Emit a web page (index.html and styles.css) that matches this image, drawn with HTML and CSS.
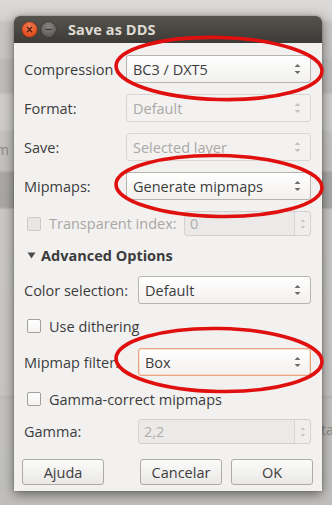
FILE: index.html
```html
<!DOCTYPE html>
<html>
<head>
<meta charset="utf-8">
<link rel="stylesheet" href="styles.css">
</head>
<body>
<div class="screen">
  <span class="bg-frag bg-m">m</span>
  <span class="bg-frag bg-ta">ta</span>
  <div class="dialog">
    <div class="titlebar">
      <span class="wbtn close"><svg width="15" height="15" viewBox="0 0 15 15"><path d="M5.3 5.3 L9.7 9.7 M9.7 5.3 L5.3 9.7" stroke="#4a1a0a" stroke-width="1.3" stroke-linecap="round"/></svg></span>
      <span class="wbtn minimize"><svg width="15" height="15" viewBox="0 0 15 15"><path d="M4.5 7.5 H10.5" stroke="#3a3a38" stroke-width="1.3"/></svg></span>
      <span class="title">Save as DDS</span>
    </div>
    <div class="content">
      <div class="grid g1">
        <span class="label">Compression</span>
        <div class="combo"><span>BC3 / DXT5</span><svg class="arr" width="7" height="12" viewBox="0 0 7 12"><path d="M0.5 4 L3.5 1 L6.5 4 Z M0.5 8 L3.5 11 L6.5 8 Z" fill="#6b6b6b"/></svg></div>
        <span class="label">Format:</span>
        <div class="combo disabled"><span>Default</span><svg class="arr" width="7" height="12" viewBox="0 0 7 12"><path d="M0.5 4 L3.5 1 L6.5 4 Z M0.5 8 L3.5 11 L6.5 8 Z" fill="#c4c2bf"/></svg></div>
        <span class="label">Save:</span>
        <div class="combo disabled"><span>Selected layer</span><svg class="arr" width="7" height="12" viewBox="0 0 7 12"><path d="M0.5 4 L3.5 1 L6.5 4 Z M0.5 8 L3.5 11 L6.5 8 Z" fill="#c4c2bf"/></svg></div>
        <span class="label">Mipmaps:</span>
        <div class="combo"><span>Generate mipmaps</span><svg class="arr" width="7" height="12" viewBox="0 0 7 12"><path d="M0.5 4 L3.5 1 L6.5 4 Z M0.5 8 L3.5 11 L6.5 8 Z" fill="#6b6b6b"/></svg></div>
      </div>

      <div class="trow">
        <span class="check disabled"></span>
        <span class="label dim">Transparent index:</span>
        <div class="spin disabled tspin"><span class="val">0</span><span class="spinbtn"><svg width="6" height="12" viewBox="0 0 6 12"><path d="M0.5 4 L3 1.5 L5.5 4 Z M0.5 8 L3 10.5 L5.5 8 Z" fill="#c8c6c3"/></svg></span></div>
      </div>

      <div class="expander">
        <svg width="9" height="7" viewBox="0 0 9 7"><path d="M0.5 0.5 H8.5 L4.5 6.5 Z" fill="#4e4e4e"/></svg>
        <span>Advanced Options</span>
      </div>

      <div class="grid g2">
        <span class="label">Color selection:</span>
        <div class="combo"><span>Default</span><svg class="arr" width="7" height="12" viewBox="0 0 7 12"><path d="M0.5 4 L3.5 1 L6.5 4 Z M0.5 8 L3.5 11 L6.5 8 Z" fill="#6b6b6b"/></svg></div>
      </div>

      <div class="crow r-dither"><span class="check"></span><span class="label">Use dithering</span></div>

      <div class="grid g2 r-filter">
        <span class="label">Mipmap filter:</span>
        <div class="combo focus"><span>Box</span><svg class="arr" width="7" height="12" viewBox="0 0 7 12"><path d="M0.5 4 L3.5 1 L6.5 4 Z M0.5 8 L3.5 11 L6.5 8 Z" fill="#6b6b6b"/></svg></div>
      </div>

      <div class="crow r-gamma-c"><span class="check"></span><span class="label">Gamma-correct mipmaps</span></div>

      <div class="grid g2 r-gamma">
        <span class="label">Gamma:</span>
        <div class="spin disabled"><span class="val">2,2</span><span class="spinbtn"><svg width="6" height="12" viewBox="0 0 6 12"><path d="M0.5 4 L3 1.5 L5.5 4 Z M0.5 8 L3 10.5 L5.5 8 Z" fill="#c8c6c3"/></svg></span></div>
      </div>

      <div class="buttons">
        <button class="btn">Ajuda</button>
        <span class="spacer"></span>
        <button class="btn">Cancelar</button>
        <button class="btn">OK</button>
      </div>
    </div>
  </div>
  <svg class="annot" width="332" height="505" viewBox="0 0 332 505">
    <ellipse cx="219" cy="68.5" rx="103" ry="31" transform="rotate(1.5 219 68.5)" fill="none" stroke="#e0100f" stroke-width="3.6"/>
    <ellipse cx="219" cy="186" rx="103" ry="30.5" transform="rotate(1 219 186)" fill="none" stroke="#e0100f" stroke-width="3.6"/>
    <ellipse cx="219" cy="360" rx="103" ry="31.5" transform="rotate(1 219 360)" fill="none" stroke="#e0100f" stroke-width="3.6"/>
  </svg>
</div>
</body>
</html>
```

FILE: styles.css
```css
* { box-sizing: border-box; }
html, body { margin: 0; padding: 0; }
body {
  width: 332px;
  height: 505px;
  overflow: hidden;
  font-family: "Open Sans", "DejaVu Sans", sans-serif;
}
.screen {
  position: relative;
  width: 332px;
  height: 505px;
  overflow: hidden;
  padding: 16px 0 0 14px;
  background: linear-gradient(to bottom,
    #dcdbd9 0px, #d3d2d0 20px,
    #c8c7c5 22px, #c6c5c3 58px,
    #bebdbb 60px, #bdbcba 92px,
    #cfcecc 95px, #cdccca 130px,
    #c4c3c1 132px, #c2c1bf 170px,
    #aaa9a7 173px, #a8a7a5 207px,
    #c9c8c6 210px, #c6c5c3 395px,
    #b9b8b6 397px, #c3c2c0 400px, #c0bfbd 505px);
}
.bg-frag {
  position: absolute;
  font-size: 14px;
  color: #8d8c8a;
}
.bg-m { left: -4px; top: 140px; }
.bg-ta { left: 321px; top: 420px; }

.dialog {
  position: relative;
  width: 308px;
  height: 475px;
  background: #f2f1f0;
  border-radius: 6px 6px 0 0;
  box-shadow: 0 3px 12px rgba(0,0,0,0.5), 0 0 2px rgba(0,0,0,0.3);
  display: flex;
  flex-direction: column;
}
.titlebar {
  height: 27px;
  flex: none;
  display: flex;
  align-items: center;
  padding-left: 8px;
  background: linear-gradient(to bottom, #55534e, #3c3b37);
  border-radius: 6px 6px 0 0;
}
.wbtn {
  width: 15px;
  height: 15px;
  border-radius: 50%;
  display: block;
  flex: none;
}
.wbtn svg { display: block; }
.close {
  background: radial-gradient(circle at 50% 35%, #f5845a, #df4a1b 70%);
  box-shadow: 0 0 0 0.5px #7a2a10;
}
.minimize {
  margin-left: 4px;
  background: radial-gradient(circle at 50% 35%, #8a8985, #5f5e5a 70%);
  box-shadow: 0 0 0 0.5px #2e2d2a;
}
.title {
  margin-left: 12px;
  color: #dfdbd2;
  font-weight: bold;
  font-size: 14.5px;
  letter-spacing: 0.1px;
}

.content {
  flex: 1;
  padding: 12px 11px 0 10px;
  display: flex;
  flex-direction: column;
  color: #3c3c3c;
  font-size: 14.5px;
}
.label { white-space: nowrap; }
.dim { color: #a9a7a3; }

.grid {
  display: grid;
  align-items: center;
}
.g1 {
  grid-template-columns: 102px 1fr;
  row-gap: 11px;
}
.g2 {
  grid-template-columns: 114px 1fr;
  margin-top: 11px;
}

.combo {
  height: 28px;
  border: 1px solid #b7b4ae;
  border-radius: 3px;
  background: linear-gradient(to bottom, #ffffff, #f2f1ef);
  display: flex;
  align-items: center;
  padding: 0 9px 0 6px;
  color: #3c3c3c;
}
.combo span { flex: 1; }
.combo .arr { display: block; flex: none; }
.combo.disabled {
  background: #f3f2f1;
  border-color: #d8d6d2;
  color: #aaa8a4;
}
.combo.focus {
  border-color: #eba27f;
  box-shadow: inset 0 0 0 0.5px #f5c5ad;
}

.spin {
  height: 25px;
  border: 1px solid #d4d2ce;
  border-radius: 3px;
  background: #ebeae8;
  display: flex;
  align-items: stretch;
  color: #b0aeaa;
}
.spin .val {
  flex: 1;
  display: flex;
  align-items: center;
  padding-left: 5px;
}
.spinbtn {
  width: 16px;
  border-left: 1px solid #d8d6d2;
  display: flex;
  align-items: center;
  justify-content: center;
  background: #efeeec;
  border-radius: 0 3px 3px 0;
}
.spinbtn svg { display: block; }

.trow {
  margin-top: 11px;
  display: flex;
  align-items: center;
  height: 25px;
}
.trow .check { margin-left: 3px; }
.trow .label { margin-left: 8px; }
.tspin { margin-left: auto; width: 127px; }

.check {
  width: 14px;
  height: 14px;
  flex: none;
  border: 1px solid #a3a09b;
  border-radius: 2px;
  background: linear-gradient(to bottom, #ffffff, #f4f3f2);
}
.check.disabled {
  background: #e8e7e5;
  border-color: #cbc9c5;
}

.expander {
  margin-top: 9px;
  height: 20px;
  display: flex;
  align-items: center;
  font-weight: bold;
  color: #3c3c3c;
}
.expander svg { display: block; margin-left: 3px; margin-right: 5px; }

.crow {
  height: 18px;
  display: flex;
  align-items: center;
}
.crow .check { margin-left: 3px; }
.crow .label { margin-left: 8px; }
.r-dither { margin-top: 13px; }
.r-filter { margin-top: 13px; }
.r-gamma-c { margin-top: 14px; }
.r-gamma { margin-top: 11px; }

.buttons {
  margin: 15px -2px 0 -2px;
  display: flex;
  gap: 9px;
}
.spacer { flex: 1; }
.btn {
  width: 82px;
  height: 26px;
  border: 1px solid #aeaba6;
  border-radius: 3px;
  background: linear-gradient(to bottom, #fbfbfa, #e9e8e6);
  font-family: inherit;
  font-size: 14.5px;
  color: #3c3c3c;
  padding: 0;
}

.annot {
  position: absolute;
  left: 0;
  top: 0;
  pointer-events: none;
}
```
